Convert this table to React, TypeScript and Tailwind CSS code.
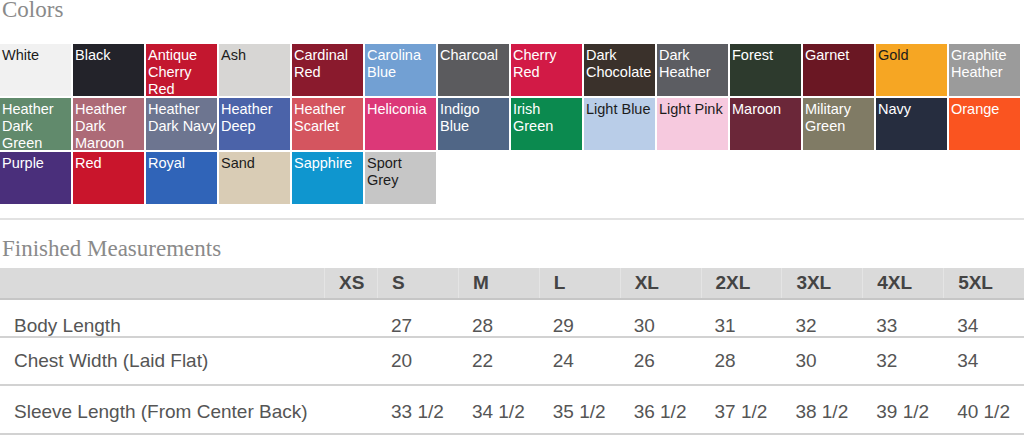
import React from 'react';

type Swatch = { name: string; bg: string; dark?: boolean };

const swatches: Swatch[] = [
  { name: 'White', bg: '#f1f1f1', dark: true },
  { name: 'Black', bg: '#23232a' },
  { name: 'Antique Cherry Red', bg: '#c3172f' },
  { name: 'Ash', bg: '#d7d6d4', dark: true },
  { name: 'Cardinal Red', bg: '#8a1a2d' },
  { name: 'Carolina Blue', bg: '#72a0d3' },
  { name: 'Charcoal', bg: '#5b5b5e' },
  { name: 'Cherry Red', bg: '#d21a46' },
  { name: 'Dark Chocolate', bg: '#3a312b' },
  { name: 'Dark Heather', bg: '#5c5d62' },
  { name: 'Forest', bg: '#2d3a2d' },
  { name: 'Garnet', bg: '#6a1723' },
  { name: 'Gold', bg: '#f6a623', dark: true },
  { name: 'Graphite Heather', bg: '#9b9b9b' },
  { name: 'Heather Dark Green', bg: '#618a6c' },
  { name: 'Heather Dark Maroon', bg: '#ad6a77' },
  { name: 'Heather Dark Navy', bg: '#6d7590' },
  { name: 'Heather Deep', bg: '#4b63a9' },
  { name: 'Heather Scarlet', bg: '#d4555f' },
  { name: 'Heliconia', bg: '#dc3878' },
  { name: 'Indigo Blue', bg: '#506686' },
  { name: 'Irish Green', bg: '#0b8a4f' },
  { name: 'Light Blue', bg: '#b9cde8', dark: true },
  { name: 'Light Pink', bg: '#f6c9de', dark: true },
  { name: 'Maroon', bg: '#6b2739' },
  { name: 'Military Green', bg: '#807b65' },
  { name: 'Navy', bg: '#262d3f' },
  { name: 'Orange', bg: '#fa5420' },
  { name: 'Purple', bg: '#4a2f7b' },
  { name: 'Red', bg: '#c9152c' },
  { name: 'Royal', bg: '#3064b8' },
  { name: 'Sand', bg: '#d9ccb5', dark: true },
  { name: 'Sapphire', bg: '#0f96cf' },
  { name: 'Sport Grey', bg: '#c6c6c6', dark: true },
];

const sizes = ['XS', 'S', 'M', 'L', 'XL', '2XL', '3XL', '4XL', '5XL'];

const rows = [
  { label: 'Body Length', values: ['', '27', '28', '29', '30', '31', '32', '33', '34'], cls: 'h-[38px] pt-[15px]' },
  { label: 'Chest Width (Laid Flat)', values: ['', '20', '22', '24', '26', '28', '30', '32', '34'], cls: 'h-[48px] pt-[12px]' },
  {
    label: 'Sleeve Length (From Center Back)',
    values: ['', '33 1/2', '34 1/2', '35 1/2', '36 1/2', '37 1/2', '38 1/2', '39 1/2', '40 1/2'],
    cls: 'h-[49px] pt-[15px]',
  },
];

const App: React.FC = () => {
  return (
    <div className="flex flex-col w-[1024px] h-[437px] overflow-hidden bg-white">
      {/* Colors */}
      <div className="flex flex-col h-[44px]">
        <h2 className="-mt-[2px] pl-[2px] text-[23px] leading-[23px] text-[#8a8a8a] font-['Liberation_Serif',serif]">
          Colors
        </h2>
      </div>
      <div className="grid grid-cols-[repeat(14,71px)] auto-rows-[52px] gap-[2px] font-['Liberation_Sans',Arial,sans-serif]">
        {swatches.map((s) => (
          <div
            key={s.name}
            className={`overflow-hidden pl-[2px] pt-[3px] text-[14.5px] leading-[17px] ${s.dark ? 'text-[#1c1c1c]' : 'text-white'}`}
            style={{ backgroundColor: s.bg }}
          >
            {s.name}
          </div>
        ))}
      </div>
      <div className="mt-[14px] h-[2px] bg-[#e2e2e2]" />

      {/* Finished Measurements */}
      <h2 className="mt-[17px] pl-[2px] text-[23px] leading-[23px] text-[#8a8a8a] font-['Liberation_Serif',serif]">
        Finished Measurements
      </h2>
      <div className="mt-[8px] font-['Liberation_Sans',Arial,sans-serif]">
        <div className="grid grid-cols-[324px_53px_repeat(8,1fr)] h-[32px] bg-[#dadada] border-b-2 border-[#c6c6c6]">
          <div />
          {sizes.map((s) => (
            <div
              key={s}
              className="border-l border-[#e4e4e4] pl-[14px] pt-[5px] text-[19px] leading-[20px] font-bold text-[#444]"
            >
              {s}
            </div>
          ))}
        </div>
        {rows.map((r) => (
          <div
            key={r.label}
            className={`grid grid-cols-[324px_53px_repeat(8,1fr)] border-b-2 border-[#d2d2d2] text-[19px] leading-[22px] text-[#555] ${r.cls}`}
          >
            <div className="pl-[14px] whitespace-nowrap">{r.label}</div>
            {r.values.map((v, i) => (
              <div key={i} className="pl-[14px] whitespace-nowrap">
                {v}
              </div>
            ))}
          </div>
        ))}
      </div>
    </div>
  );
};

export default App;
